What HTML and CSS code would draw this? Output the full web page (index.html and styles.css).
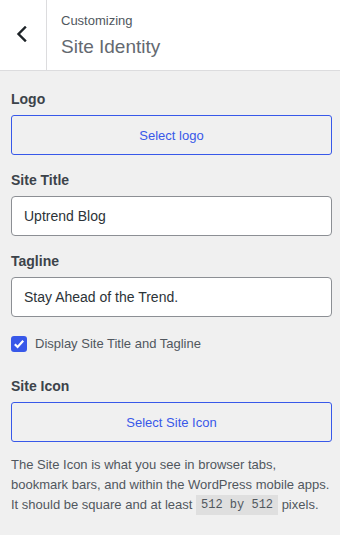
FILE: index.html
```html
<!DOCTYPE html>
<html lang="en">
<head>
    <meta charset="UTF-8">
    <meta name="viewport" content="width=device-width, initial-scale=1.0">
    <title>Site Identity</title>
    <link rel="stylesheet" href="styles.css">
</head>
<body>

<header class="panel-header">
    <button class="back-btn" aria-label="Back">
        <svg width="12" height="16" viewBox="0 0 12 16">
            <path d="M9 1.5 L2.5 8 L9 14.5" fill="none" stroke="#1d2327" stroke-width="2.4" stroke-linecap="square"/>
        </svg>
    </button>
    <div class="panel-title">
        <span class="crumb">Customizing</span>
        <h1>Site Identity</h1>
    </div>
</header>

<main class="controls">
    <!-- Logo -->
    <div class="control">
        <span class="control-title">Logo</span>
        <button class="media-btn">Select logo</button>
    </div>

    <!-- Site title -->
    <div class="control">
        <label class="control-title" for="blogname">Site Title</label>
        <input type="text" id="blogname" class="text-input" value="Uptrend Blog">
    </div>

    <!-- Tagline -->
    <div class="control">
        <label class="control-title" for="tagline">Tagline</label>
        <input type="text" id="tagline" class="text-input" value="Stay Ahead of the Trend.">
    </div>

    <label class="control checkbox-row">
        <span class="checkbox">
            <svg width="12" height="12" viewBox="0 0 12 12">
                <path d="M1.8 6.2 L4.6 9 L10.2 2.8" fill="none" stroke="#fff" stroke-width="2.2"/>
            </svg>
        </span>
        Display Site Title and Tagline
    </label>

    <!-- Site icon -->
    <div class="control">
        <span class="control-title">Site Icon</span>
        <button class="media-btn">Select Site Icon</button>
    </div>

    <p class="description">
        The Site Icon is what you see in browser tabs, bookmark bars, and within the WordPress mobile apps. It should be square and at least <code>512 by 512</code> pixels.
    </p>
</main>

</body>
</html>
```

FILE: styles.css
```css
body {
    font-family: "Liberation Sans", Arial, sans-serif;
    background-color: #f0f0f0;
    color: #50575e;
    margin: 0;
    padding: 0;
}
.panel-header {
    display: flex;
    height: 70px;
    background: #fff;
    border-bottom: 1px solid #dcdcde;
}
.back-btn {
    width: 47px;
    padding: 26px 0 0 16px;
    margin: 0;
    display: flex;
    align-items: flex-start;
    background: #fff;
    border: none;
    border-right: 1px solid #dcdcde;
    cursor: pointer;
}
.panel-title {
    padding: 11px 0 0 14px;
}
.crumb {
    display: block;
    font-size: 13px;
    line-height: 20px;
    color: #50575e;
}
.panel-title h1 {
    margin: 2px 0 0;
    font-size: 19px;
    font-weight: 300;
    line-height: 28px;
    color: #646970;
}
.controls {
    padding: 16px 8px 0 11px;
}
.control {
    margin-bottom: 13px;
}
.control-title {
    display: block;
    font-size: 14px;
    font-weight: bold;
    line-height: 24px;
    margin-bottom: 4px;
    color: #3c434a;
}
.media-btn {
    display: block;
    width: 100%;
    height: 40px;
    background: transparent;
    border: 1px solid #3858e9;
    border-radius: 3px;
    color: #3858e9;
    font-family: inherit;
    font-size: 13px;
    cursor: pointer;
}
.text-input {
    display: block;
    box-sizing: border-box;
    width: 100%;
    height: 40px;
    padding: 0 12px;
    background: #fff;
    border: 1px solid #8c8f94;
    border-radius: 4px;
    color: #2c3338;
    font-family: inherit;
    font-size: 14px;
}
.checkbox-row {
    display: flex;
    align-items: center;
    gap: 8px;
    margin-top: 17px;
    margin-bottom: 20px;
    font-size: 13px;
    line-height: 20px;
    color: #50575e;
    cursor: pointer;
}
.checkbox {
    width: 16px;
    height: 16px;
    border-radius: 3px;
    background: #3858e9;
    display: flex;
    align-items: center;
    justify-content: center;
}
.description {
    margin: 0;
    font-size: 13px;
    line-height: 20px;
    color: #50575e;
}
.description code {
    display: inline-block;
    font-family: "Liberation Mono", monospace;
    font-size: 12px;
    line-height: 18px;
    padding: 1px 5px;
    vertical-align: top;
    background: rgba(0, 0, 0, 0.07);
}
```
